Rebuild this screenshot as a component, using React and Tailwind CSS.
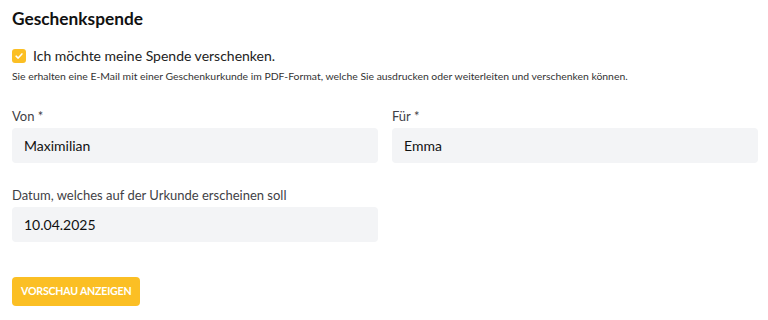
import { useState } from "react";

function Field({ label, value }) {
  return (
    <div className="flex flex-col">
      <label className="text-[13px] text-[#3f3f46] leading-5 mb-[2px]">{label}</label>
      <div className="h-[35px] rounded bg-[#f3f4f6] px-3 flex items-center text-[14px] text-[#111]">
        {value}
      </div>
    </div>
  );
}

export default function App() {
  const [checked, setChecked] = useState(true);

  return (
    <div className="w-[768px] h-[320px] bg-white px-3 pt-[7px] font-['Lato',sans-serif] text-[#222]">
      <h2 className="text-[17.3px] font-bold leading-6 text-[#111]">Geschenkspende</h2>

      <div className="mt-[15px] flex items-center gap-[7px]">
        <button
          onClick={() => setChecked(!checked)}
          className={`w-[14px] h-[14px] rounded-[3px] flex items-center justify-center ${checked ? "bg-[#fbbf24]" : "border border-gray-400"}`}
        >
          {checked && (
            <svg viewBox="0 0 12 12" className="w-[10px] h-[10px]">
              <path d="M2.5 6.2 L5 8.5 L9.5 3.5" fill="none" stroke="white" strokeWidth="1.8" strokeLinecap="round" strokeLinejoin="round" />
            </svg>
          )}
        </button>
        <span className="text-[14px] leading-5 text-[#222]">Ich möchte meine Spende verschenken.</span>
      </div>
      <p className="text-[10.4px] leading-4 text-[#333] mt-[2px]">
        Sie erhalten eine E-Mail mit einer Geschenkurkunde im PDF-Format, welche Sie ausdrucken oder weiterleiten und verschenken können.
      </p>

      <div className="mt-[22px] grid grid-cols-2 gap-x-[14px] w-[746px]">
        <Field label="Von *" value="Maximilian" />
        <Field label="Für *" value="Emma" />
      </div>

      <div className="mt-[22px] w-[366px]">
        <Field label="Datum, welches auf der Urkunde erscheinen soll" value="10.04.2025" />
      </div>

      <button className="mt-[35px] h-[29px] px-[9px] rounded bg-[#fbbf24] text-white text-[10.6px] font-bold uppercase tracking-[-0.2px]">
        Vorschau anzeigen
      </button>
    </div>
  );
}
